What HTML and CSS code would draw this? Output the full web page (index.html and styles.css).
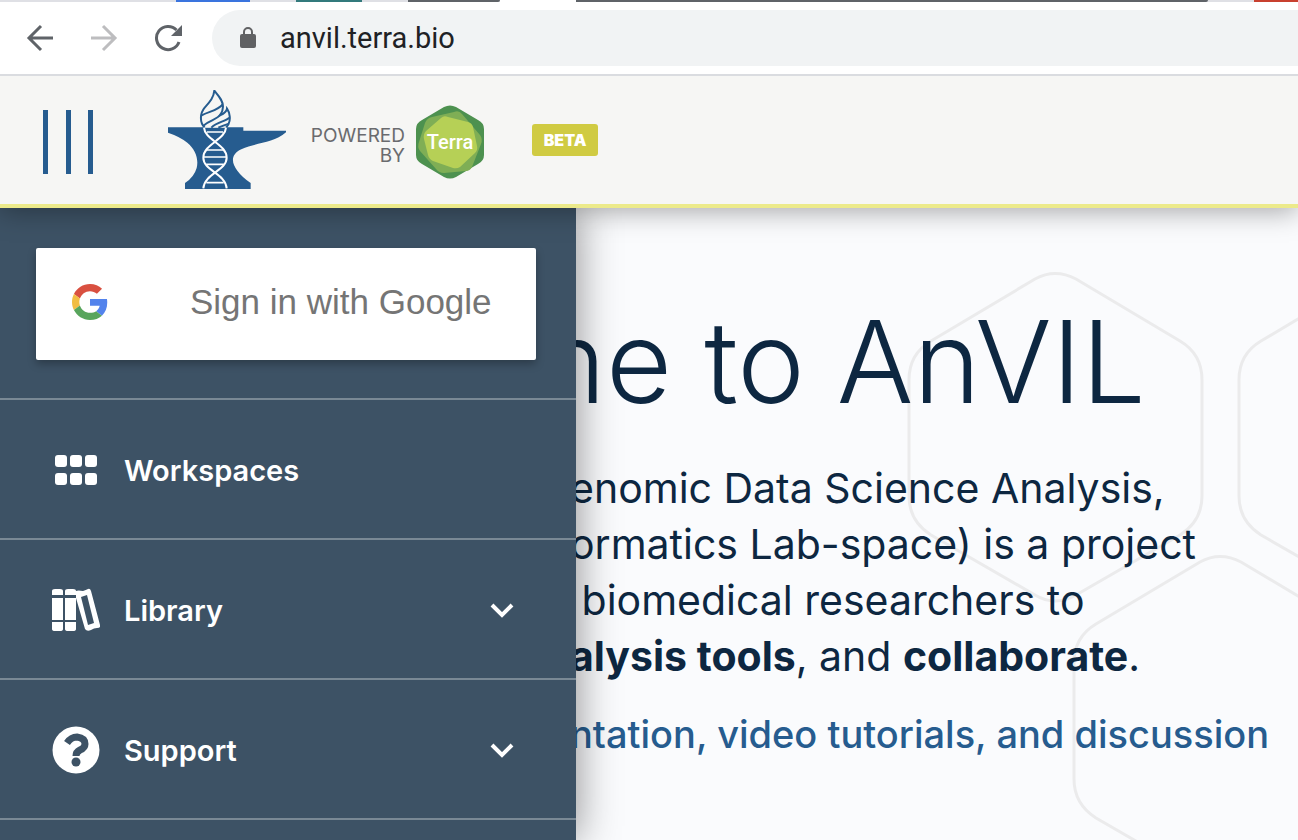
FILE: index.html
```html
<!DOCTYPE html>
<html lang="en">
<head>
<meta charset="utf-8">
<title>AnVIL</title>
<link rel="stylesheet" href="styles.css">
</head>
<body>
<div class="browser">
  <div class="tabs"><i class="tab blue"></i><i class="tab teal"></i><i class="tab dark"></i><i class="tab active"></i><i class="tab dark wide"></i><i class="tab gap"></i><i class="tab red"></i></div>
  <div class="toolbar">
    <button class="nav" aria-label="Back"><svg width="28" height="28" viewBox="0 0 28 28" fill="none" stroke="#5f6368" stroke-width="3"><path d="M27 14H3M15 2L3 14l12 12"/></svg></button>
    <button class="nav" aria-label="Forward"><svg width="28" height="28" viewBox="0 0 28 28" fill="none" stroke="#bdbdbf" stroke-width="3"><path d="M1 14h24M13 2l12 12-12 12"/></svg></button>
    <button class="nav" aria-label="Reload"><svg width="28" height="28" viewBox="0 0 28 28"><path d="M25 18A11.600 11.600 0 1 1 22.500 6" fill="none" stroke="#5f6368" stroke-width="3"/><path d="M28 1v11H17z" fill="#5f6368"/></svg></button>
    <div class="address">
      <svg width="16" height="22" viewBox="0 0 16 22"><rect y="7" width="16" height="14" rx="2" fill="#606163"/><path d="M4 8V5a4 4 0 0 1 8 0v3" fill="none" stroke="#606163" stroke-width="2"/></svg>
      <input class="url" type="text" aria-label="Address" value="anvil.terra.bio">
    </div>
  </div>
</div>

<header class="topbar">
  <button class="menu" aria-label="Menu"><i></i><i></i><i></i></button>
  <a class="brand" href="#" aria-label="AnVIL">
    <svg width="118" height="99" viewBox="54 30 354 297">
      <path fill="#265c8f" d="M54 142H280V152H408V157C370 190 320 187 274 208C240 224 245 250 262 272Q276 291 302 309V327H105V309Q132 292 140 264C147 235 135 207 112 188Q90 170 54 158Z"/>
      <g fill="none" stroke="#265c8f" stroke-width="6">
        <path fill="#f6f6f4" d="M164 143C149 127 149 101 164 83C178 67 191 54 193 32C206 48 219 61 219 80C219 91 215 99 210 106C222 101 230 96 231 86C240 99 242 119 236 131Q233 138 228 143"/>
        <path d="M155 106C177 94 205 91 218 73M160 137C181 119 202 119 212 103M184 143C201 126 225 125 238 113M205 143Q219 137 237 131"/>
      </g>
      <g fill="none" stroke="#fff">
        <path stroke-width="6" d="M162 143C164 179 230 193 230 233C230 272 163 281 160 325M228 143C226 179 160 193 160 233C160 272 227 281 230 325"/>
        <path stroke-width="5" d="M171 156H219M170 210H220M161 231H229M169 253H221M169 308H221"/>
      </g>
    </svg>
  </a>
  <span class="powered">POWERED<br>BY</span>
  <svg class="terra" width="68" height="74" viewBox="0 0 68 74">
    <path fill="#4d914f" d="M28 2Q34-1 40 2L62 15Q68 18 68 24V50Q68 56 62 59L40 72Q34 75 28 72L6 59Q0 56 0 50V24Q0 18 6 15Z"/>
    <path fill="#7fae55" d="M38 7Q43 5 46 9L64 30Q67 34 65 39L56 62Q54 66 50 66L28 68Q23 68 20 64L4 46Q1 42 3 37L9 18Q11 13 16 12Z"/>
    <path fill="#b6d056" d="M25 13Q28 10 32 12L52 17Q56 18 57 22L61 41Q62 45 59 48L44 62Q41 64 37 63L17 56Q13 54 12 50L8 34Q7 29 10 26Z"/>
    <text x="34" y="44" text-anchor="middle" class="terra-name">Terra</text>
  </svg>
  <span class="beta">BETA</span>
</header>

<div class="stage">
  <aside class="drawer">
    <div class="signin-row">
      <button class="signin">
        <svg width="36" height="36" viewBox="0 0 48 48"><path fill="#d95040" d="M24 9.500c3.540 0 6.710 1.220 9.210 3.600l6.850-6.850C35.900 2.380 30.470 0 24 0 14.620 0 6.510 5.380 2.560 13.220l7.980 6.190C12.430 13.720 17.740 9.500 24 9.500z"/><path fill="#5383ec" d="M46.980 24.550c0-1.570-.150-3.090-.380-4.550H24v9.020h12.940c-.580 2.960-2.260 5.480-4.780 7.180l7.730 6c4.510-4.180 7.090-10.360 7.090-17.650z"/><path fill="#f2bd42" d="M10.530 28.590c-.480-1.450-.760-2.990-.760-4.590s.270-3.140.760-4.590l-7.980-6.190C.920 16.460 0 20.120 0 24s.920 7.540 2.560 10.780l7.970-6.190z"/><path fill="#58a55c" d="M24 48c6.480 0 11.930-2.130 15.890-5.810l-7.730-6c-2.150 1.450-4.920 2.300-8.160 2.300-6.260 0-11.570-4.220-13.470-9.910l-7.980 6.190C6.510 42.620 14.620 48 24 48z"/></svg>
        <span>Sign in with Google</span>
      </button>
    </div>
    <nav>
      <a class="item" href="#">
        <svg width="48" height="48" viewBox="0 0 48 48" fill="#fff"><rect x="3" y="9" width="12" height="12" rx="3"/><rect x="18" y="9" width="12" height="12" rx="3"/><rect x="33" y="9" width="12" height="12" rx="3"/><rect x="3" y="27" width="12" height="12" rx="3"/><rect x="18" y="27" width="12" height="12" rx="3"/><rect x="33" y="27" width="12" height="12" rx="3"/></svg>
        <span>Workspaces</span>
      </a>
      <a class="item" href="#">
        <svg width="48" height="48" viewBox="0 0 48 48" fill="#fff"><path d="M0 9V5Q0 3 3 3H8Q11 3 11 5V9ZM0 12H11V34H0ZM0 36H11V43Q11 45 8 45H3Q0 45 0 43ZM13 9V5Q13 3 16 3H21Q24 3 24 5V9ZM13 12H24V34H13ZM13 36H24V43Q24 45 21 45H16Q13 45 13 43Z"/><path fill-rule="evenodd" d="M24 5Q26 4 31 5Q34 4 36 3Q38 2 39 5L48 39Q49 42 45 42Q42 42 39 44Q35 46 33 43L24 12ZM29 11L36 39L42 37L35 9Z"/></svg>
        <span>Library</span>
        <svg class="chevron" width="24" height="16" viewBox="0 0 24 16"><path d="M2 3l10 10L22 3" fill="none" stroke="#fff" stroke-width="4"/></svg>
      </a>
      <a class="item" href="#">
        <svg width="48" height="48" viewBox="0 0 48 48"><circle cx="24" cy="24" r="23.500" fill="#fff"/><path d="M15 17Q19 11 25 11Q33 12 33 18Q33 22 28 24Q24 26 24 30" fill="none" stroke="#3d5265" stroke-width="7"/><circle cx="24" cy="36" r="4.500" fill="#3d5265"/></svg>
        <span>Support</span>
        <svg class="chevron" width="24" height="16" viewBox="0 0 24 16"><path d="M2 3l10 10L22 3" fill="none" stroke="#fff" stroke-width="4"/></svg>
      </a>
    </nav>
  </aside>

  <main class="hero">
    <svg class="hexes" width="420" height="632" viewBox="878 208 420 632" fill="none" stroke="#ebebec" stroke-width="3">
      <defs><path id="hex" d="M1035 279Q1055 268 1076 279L1180 341Q1202 354 1202 380V496Q1202 521 1180 535L1076 595Q1055 607 1035 595L931 535Q909 521 909 496V380Q909 354 931 341Z"/></defs>
      <use href="#hex"/><use href="#hex" x="330"/><use href="#hex" x="165" y="283"/>
    </svg>
    <h1 class="line"><span class="lead">m</span><span>e to AnVIL</span></h1>
    <p class="copy">
      <span class="line"><span class="lead">G</span><span>enomic Data Science Analysis,</span></span>
      <span class="line"><span class="lead">Inf</span><span>ormatics Lab-space) is a project</span></span>
      <span class="line"><span class="lead">for</span><span>&nbsp;biomedical researchers to</span></span>
      <span class="line"><span class="lead"><b>an</b></span><span><b>alysis tools</b>, and <b>collaborate</b>.</span></span>
    </p>
    <a class="line more" href="#"><span class="lead">e</span><span>ntation, video tutorials, and discussion</span></a>
  </main>
</div>
</body>
</html>
```
FILE: styles.css
```css
* { box-sizing: border-box; }
body {
  margin: 0;
  height: 100vh;
  overflow: hidden;
  display: flex;
  flex-direction: column;
  font-family: Inter, "Open Sans", sans-serif;
}
button { border: 0; background: none; padding: 0; font: inherit; }
a { text-decoration: none; }
svg { display: block; flex: none; }

.browser { position: relative; z-index: 4; background: #fff; border-bottom: 2px solid #dadce0; }
.tabs { display: flex; height: 2px; background: #dfe0e5; padding-left: 176px; }
.tab { height: 2px; }
.blue { width: 74px; background: #3a74de; margin-right: 46px; }
.teal { width: 66px; background: #337a7c; margin-right: 46px; }
.dark { width: 92px; background: #5f6368; border-bottom-right-radius: 2px; }
.active { width: 76px; background: #fff; }
.wide { width: 632px; }
.gap { width: 46px; }
.red { flex: 1; background: #c8402f; }
.toolbar { display: flex; align-items: center; padding: 8px 0 8px 26px; gap: 36px; }
.nav { width: 28px; height: 28px; }
.address {
  flex: 1;
  height: 56px;
  display: flex;
  align-items: center;
  gap: 24px;
  margin-left: -6px;
  padding-left: 28px;
  background: #f1f3f4;
  border-radius: 28px 0 0 28px;
}
.url {
  flex: 1;
  border: 0;
  padding: 0;
  background: none;
  outline: none;
  color: #202124;
  font: 29px Roboto, sans-serif;
}

.topbar {
  position: relative;
  z-index: 3;
  display: flex;
  align-items: center;
  height: 132px;
  flex: none;
  padding-left: 43px;
  background: #f6f6f4;
  border-bottom: 4px solid #ecea8a;
  box-shadow: 0 3px 26px rgba(0, 0, 0, .35);
}
.menu { display: flex; justify-content: space-between; width: 50px; height: 64px; margin: 4px 75px 0 0; }
.menu i { width: 5px; height: 64px; background: #265c8f; }
.brand { margin: 0 20px 2px 0; }
.powered {
  width: 99px;
  margin: 12px 11px 0 0;
  color: #6a6b6e;
  font-size: 19px;
  line-height: 20px;
  text-align: right;
}
.terra { margin: 4px 48px 0 0; }
.terra-name { fill: #fff; font: 500 20px Roboto, sans-serif; }
.beta {
  width: 66px;
  height: 32px;
  border-radius: 3px;
  background: #d0cb42;
  color: #fff;
  font-size: 16px;
  font-weight: 900;
  line-height: 32px;
  text-align: center;
}

.stage { position: relative; flex: 1; overflow: hidden; background: #fafbfd; }
.drawer {
  position: absolute;
  z-index: 2;
  top: 0;
  bottom: 0;
  left: 0;
  width: 576px;
  background: #3d5265;
  box-shadow: 0 0 40px rgba(0, 0, 0, .45);
}
.signin-row { padding: 40px 40px 38px 36px; border-bottom: 2px solid #7a8995; }
.signin {
  display: flex;
  align-items: center;
  width: 100%;
  height: 112px;
  padding: 0 0 4px 36px;
  gap: 82px;
  background: #fff;
  border-radius: 2px;
  color: #757575;
  font: 35px "Liberation Sans", sans-serif;
  box-shadow: 0 4px 8px rgba(0, 0, 0, .28);
}
.item {
  display: flex;
  align-items: center;
  gap: 24px;
  height: 140px;
  padding: 2px 62px 0 52px;
  border-bottom: 2px solid #7a8995;
  color: #fff;
  font-size: 29px;
  font-weight: 600;
}
.chevron { margin-left: auto; }

.hero { position: relative; padding-top: 88px; color: #0d2741; }
.hexes { position: absolute; top: 0; left: 878px; }
.line { position: relative; display: grid; grid-template-columns: 570px 1fr; white-space: nowrap; }
.lead { justify-self: end; }
h1.line {
  margin: 0 0 32px;
  grid-template-columns: 606px 1fr;
  font-size: 114px;
  font-weight: 300;
  line-height: 132px;
}
.copy { margin: 0 0 24px; font-size: 41px; font-weight: 400; line-height: 56px; }
.more { color: #265c8f; font-size: 38px; font-weight: 500; line-height: 52px; }
```
